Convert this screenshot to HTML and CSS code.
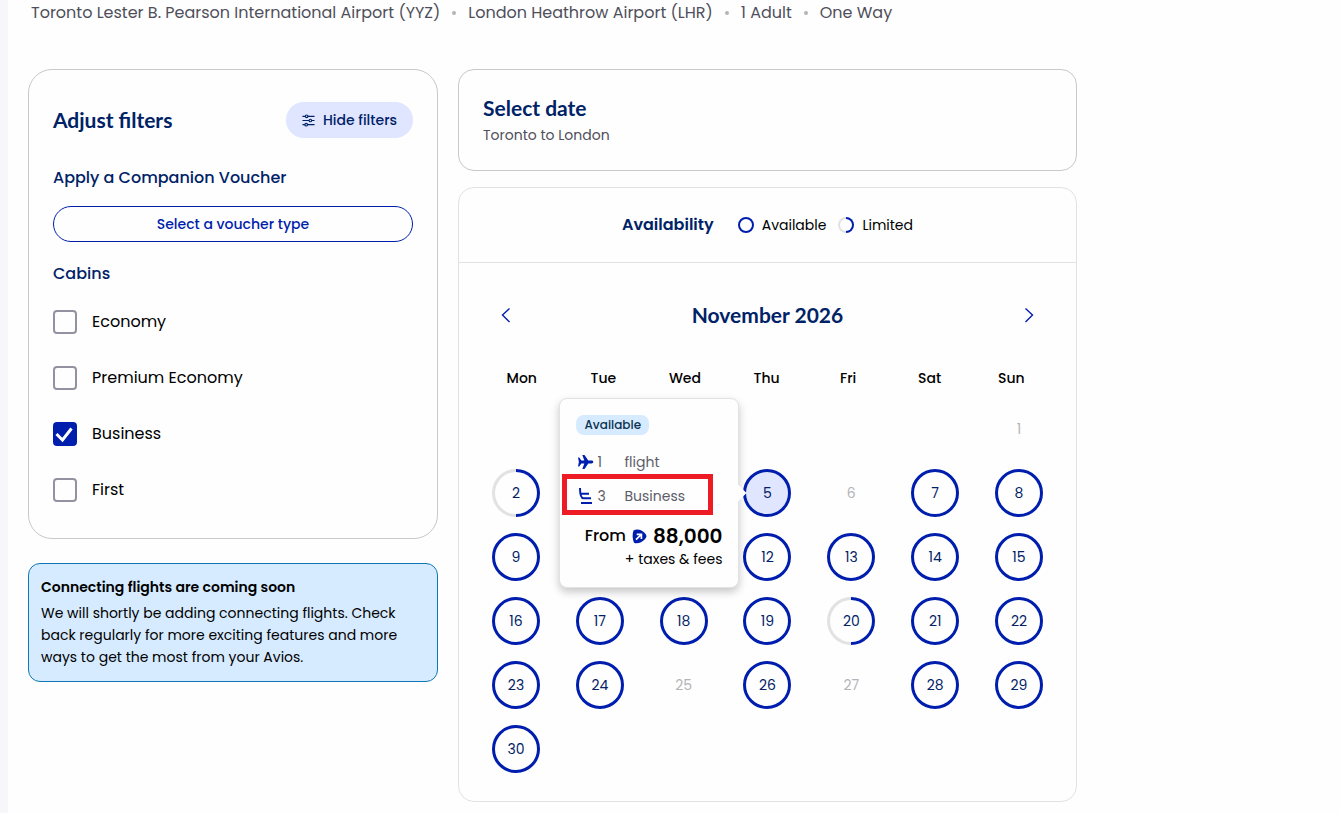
FILE: index.html
```html
<!DOCTYPE html>
<html lang="en">
<head>
<meta charset="utf-8">
<meta name="viewport" content="width=device-width, initial-scale=1">
<title>Select date</title>
<link rel="stylesheet" href="styles.css">
</head>
<body>
<div class="page">
  <header>
    <ul class="trip">
      <li>Toronto Lester B. Pearson International Airport (YYZ)</li>
      <li>London Heathrow Airport (LHR)</li>
      <li>1 Adult</li>
      <li>One Way</li>
    </ul>
  </header>
  <main class="columns">
    <aside class="side">
      <section class="filters">
        <div class="filters-head">
          <h2 class="heading">Adjust filters</h2>
          <button class="hide-btn" type="button">
            <svg width="13" height="13" viewBox="0 0 14 14" fill="none" stroke="currentColor" stroke-width="1.2"><path d="M.5 2.5h3.2M6.3 2.5h7.2M.5 7h7.2M10.3 7h3.2M.5 11.5h2.7M5.8 11.5h7.7"/><circle cx="5" cy="2.5" r="1.4"/><circle cx="9" cy="7" r="1.4"/><circle cx="4.5" cy="11.5" r="1.4"/></svg>
            Hide filters
          </button>
        </div>
        <h3 class="subhead">Apply a Companion Voucher</h3>
        <button class="voucher-btn" type="button">Select a voucher type</button>
        <h3 class="subhead">Cabins</h3>
        <div class="cabins">
          <label class="cabin"><input type="checkbox"><span>Economy</span></label>
          <label class="cabin"><input type="checkbox"><span>Premium Economy</span></label>
          <label class="cabin"><input type="checkbox" checked><svg class="tick" width="24" height="24" viewBox="0 0 24 24" fill="none" stroke="#fff" stroke-width="3"><path d="M3.500 12l6 6L18.500 6.500"/></svg><span>Business</span></label>
          <label class="cabin"><input type="checkbox"><span>First</span></label>
        </div>
      </section>
      <section class="notice">
        <h3 class="notice-title">Connecting flights are coming soon</h3>
        <p class="notice-text">We will shortly be adding connecting flights. Check back regularly for more exciting features and more ways to get the most from your Avios.</p>
      </section>
    </aside>
    <div class="content">
      <section class="date-card">
        <h2 class="heading">Select date</h2>
        <p class="route">Toronto to London</p>
      </section>
      <section class="calendar">
        <div class="legend">
          <h3 class="legend-title">Availability</h3>
          <span class="key"><span class="dot"></span>Available</span>
          <span class="key"><span class="dot dot-half"></span>Limited</span>
        </div>
        <div class="cal-body">
          <div class="month">
            <button class="nav" type="button" aria-label="Previous month"><svg width="28" height="28" viewBox="0 0 28 28" fill="none" stroke="currentColor" stroke-width="1.4"><path d="M17.500 7.500L10.500 14l7 7"/></svg></button>
            <h2 class="heading">November 2026</h2>
            <button class="nav" type="button" aria-label="Next month"><svg width="28" height="28" viewBox="0 0 28 28" fill="none" stroke="currentColor" stroke-width="1.4"><path d="M10.500 7.500l7 6.500-7 7"/></svg></button>
          </div>
          <table class="days">
            <thead>
              <tr><th>Mon</th><th>Tue</th><th>Wed</th><th>Thu</th><th>Fri</th><th>Sat</th><th>Sun</th></tr>
            </thead>
            <tbody>
              <tr><td></td><td></td><td></td><td></td><td></td><td></td><td class="off">1</td></tr>
              <tr>
                <td><button class="day half" type="button">2</button></td><td></td><td></td>
                <td>
                  <button class="day picked" type="button">5</button>
                  <div class="tip" role="tooltip">
                    <span class="badge">Available</span>
                    <div class="tip-row">
                      <svg width="18" height="16" viewBox="0 0 18 16" fill="#001ead"><path d="M2 3.500h1.300L5.300 6.600h3L6.300 1h2.200l3.800 5.600h3.200c1.100 0 1.800.7 1.800 1.400s-.7 1.400-1.800 1.400h-3.200L8.500 15H6.300l2-5.600h-3l-2 3.100H2L2.900 8z"/></svg>
                      <span>1</span><span>flight</span>
                    </div>
                    <div class="tip-row marked">
                      <svg width="18" height="16" viewBox="0 0 18 16" fill="none" stroke="#001ead" stroke-width="2"><path d="M4 0c0 6 .8 10.300 3.500 10.300H15M5 5.800h8M5 15h11"/></svg>
                      <span>3</span><span>Business</span>
                    </div>
                    <div class="price">
                      <span>From</span>
                      <svg width="15" height="15" viewBox="0 0 15 15"><path d="M1.500 1.500C4 0 7 .2 9.500 1.600 12 3 14 5.200 14.500 7.200c-.6 2.500-3 4.700-5.500 6C6.500 14.500 4 14.800 2 13.700.300 10 .200 5 1.500 1.500z" fill="#001ead"/><path d="M4 10.700L8.700 6M4.700 5.300h4.700V10" fill="none" stroke="#fff" stroke-width="1.700"/></svg>
                      <strong>88,000</strong>
                    </div>
                    <div class="taxes">+ taxes &amp; fees</div>
                  </div>
                </td>
                <td class="off">6</td><td><button class="day" type="button">7</button></td><td><button class="day" type="button">8</button></td>
              </tr>
              <tr><td><button class="day" type="button">9</button></td><td></td><td></td><td><button class="day" type="button">12</button></td><td><button class="day" type="button">13</button></td><td><button class="day" type="button">14</button></td><td><button class="day" type="button">15</button></td></tr>
              <tr><td><button class="day" type="button">16</button></td><td><button class="day" type="button">17</button></td><td><button class="day" type="button">18</button></td><td><button class="day" type="button">19</button></td><td><button class="day half" type="button">20</button></td><td><button class="day" type="button">21</button></td><td><button class="day" type="button">22</button></td></tr>
              <tr><td><button class="day" type="button">23</button></td><td><button class="day" type="button">24</button></td><td class="off">25</td><td><button class="day" type="button">26</button></td><td class="off">27</td><td><button class="day" type="button">28</button></td><td><button class="day" type="button">29</button></td></tr>
              <tr><td><button class="day" type="button">30</button></td><td></td><td></td><td></td><td></td><td></td><td></td></tr>
            </tbody>
          </table>
        </div>
      </section>
    </div>
  </main>
</div>
</body>
</html>
```
FILE: styles.css
```css
* { box-sizing: border-box; }
body {
  margin: 0;
  min-height: 100vh;
  border-left: 8px solid #f7f7fa;
  background: #fefefe;
  color: #000;
  font: 14px/22px Poppins, Inter, "Open Sans", sans-serif;
}
h2, h3, p, ul { margin: 0; padding: 0; }
button { font: inherit; padding: 0; border: 0; background: none; cursor: pointer; }
svg { flex: none; display: block; }
.page { max-width: 1089px; padding: 0 20px; }

.trip {
  display: flex;
  flex-wrap: wrap;
  list-style: none;
  padding: 1px 3px 24px;
  font-size: 16px;
  line-height: 24px;
  color: #4f4f5b;
}
.trip li { display: flex; align-items: center; }
.trip li + li::before {
  content: "";
  width: 4px;
  height: 4px;
  margin: 0 12px;
  border-radius: 50%;
  background: #b4b4ba;
}

.columns { display: grid; grid-template-columns: 410px minmax(0, 1fr); gap: 20px; align-items: start; padding-top: 20px; }
.side { display: grid; gap: 24px; }
.content { display: grid; gap: 16px; }
.heading { font: 700 21px/28px Lato, "Open Sans", sans-serif; color: #002266; }

.filters { padding: 32px 24px 20px; border: 1px solid #c8c8cd; border-radius: 24px; }
.filters-head { display: flex; justify-content: space-between; align-items: center; margin-bottom: 28px; }
.hide-btn {
  display: flex;
  align-items: center;
  gap: 8px;
  height: 36px;
  padding: 0 16px;
  border-radius: 18px;
  background: #e0e6ff;
  color: #002266;
  font-weight: 500;
}
.subhead { font-size: 16px; line-height: 24px; font-weight: 500; color: #002266; }
.voucher-btn {
  width: 100%;
  height: 36px;
  margin: 16px 0 20px;
  border: 1px solid #001ead;
  border-radius: 18px;
  color: #001ead;
  font-weight: 500;
}
.cabins { padding-top: 8px; }
.cabin { position: relative; display: flex; align-items: center; gap: 15px; height: 56px; font-size: 16px; }
.cabin input {
  appearance: none;
  width: 24px;
  height: 24px;
  margin: 0;
  border: 2px solid #9492a2;
  border-radius: 4px;
}
.cabin input:checked { border-color: #001ead; background: #001ead; }
.tick { position: absolute; left: 0; pointer-events: none; }

.notice { padding: 12px 12px 13px; border: 1px solid #0f78b4; border-radius: 12px; background: #d6ebff; }
.notice-title { margin-bottom: 4px; font-size: 14px; line-height: 22px; font-weight: 600; }

.date-card { padding: 24px; border: 1px solid #c8c8cd; border-radius: 16px; }
.route { margin-top: 2px; color: #4f4f5b; }

.calendar { border: 1px solid #e2e2e4; border-radius: 16px; }
.legend { display: flex; justify-content: center; align-items: center; gap: 12px; height: 75px; border-bottom: 1px solid #e2e2e4; }
.legend-title { margin-right: 12px; font-size: 16px; font-weight: 600; color: #002266; }
.key { display: flex; align-items: center; gap: 8px; }
.dot { width: 16px; height: 16px; border: 2px solid #001ead; border-radius: 50%; }

.cal-body { padding: 32px 24px 20px 22px; }
.month { display: flex; justify-content: space-between; align-items: center; height: 40px; padding: 0 9px 0 11px; }
.nav { color: #001ead; }
.days { display: block; padding-top: 31px; }
.days thead, .days tbody { display: block; }
.days tr { display: flex; }
.days thead tr { height: 31px; }
.days th { flex: 1; padding: 0; line-height: 24px; font-weight: 500; }
.days tbody tr { justify-content: space-between; padding: 0 9px 0 11px; }
.days td { position: relative; display: flex; align-items: center; justify-content: center; width: 48px; height: 64px; padding: 0; }
.off { color: #b4b4b8; }
.day { width: 48px; height: 48px; border: 3px solid #001ead; border-radius: 50%; color: #002266; }
.dot-half, .day.half {
  border-color: transparent;
  background: linear-gradient(#fefefe, #fefefe) padding-box, linear-gradient(90deg, #e2e2e4 50%, #001ead 50%) border-box;
}
.picked { background: #e0e6ff; }

.tip {
  position: absolute;
  z-index: 1;
  right: calc(100% + 4px);
  top: 50%;
  transform: translateY(-50%);
  width: 180px;
  padding: 16px 16px 17px;
  border: 1px solid #e2e2e4;
  border-radius: 8px;
  background: #fefefe;
  box-shadow: 0 4px 8px rgba(0, 0, 0, .22);
}
.tip::after {
  content: "";
  position: absolute;
  right: -6px;
  top: calc(50% - 6px);
  width: 12px;
  height: 12px;
  background: #fefefe;
  transform: rotate(45deg);
}
.badge { display: block; width: fit-content; margin-bottom: 15px; padding: 0 8px; border-radius: 8px; background: #d6ebff; color: #0b3350; font-size: 12px; line-height: 20px; font-weight: 500; }
.tip-row { display: grid; grid-template-columns: 18px 24px 1fr; column-gap: 3px; align-items: center; height: 24px; color: #5d5d69; }
.marked { position: relative; margin: 10px 0 16px; }
.marked::before { content: ""; position: absolute; z-index: 2; inset: -10px 9px -7px -14px; border: 5px solid #ed1c24; }
.price { display: flex; align-items: center; justify-content: flex-end; gap: 6px; height: 24px; font-size: 16px; font-weight: 500; }
.price strong { font-size: 20px; font-weight: 600; }
.taxes { text-align: right; }

@media (max-width: 860px) {
  .columns { grid-template-columns: minmax(0, 1fr); }
}
```
